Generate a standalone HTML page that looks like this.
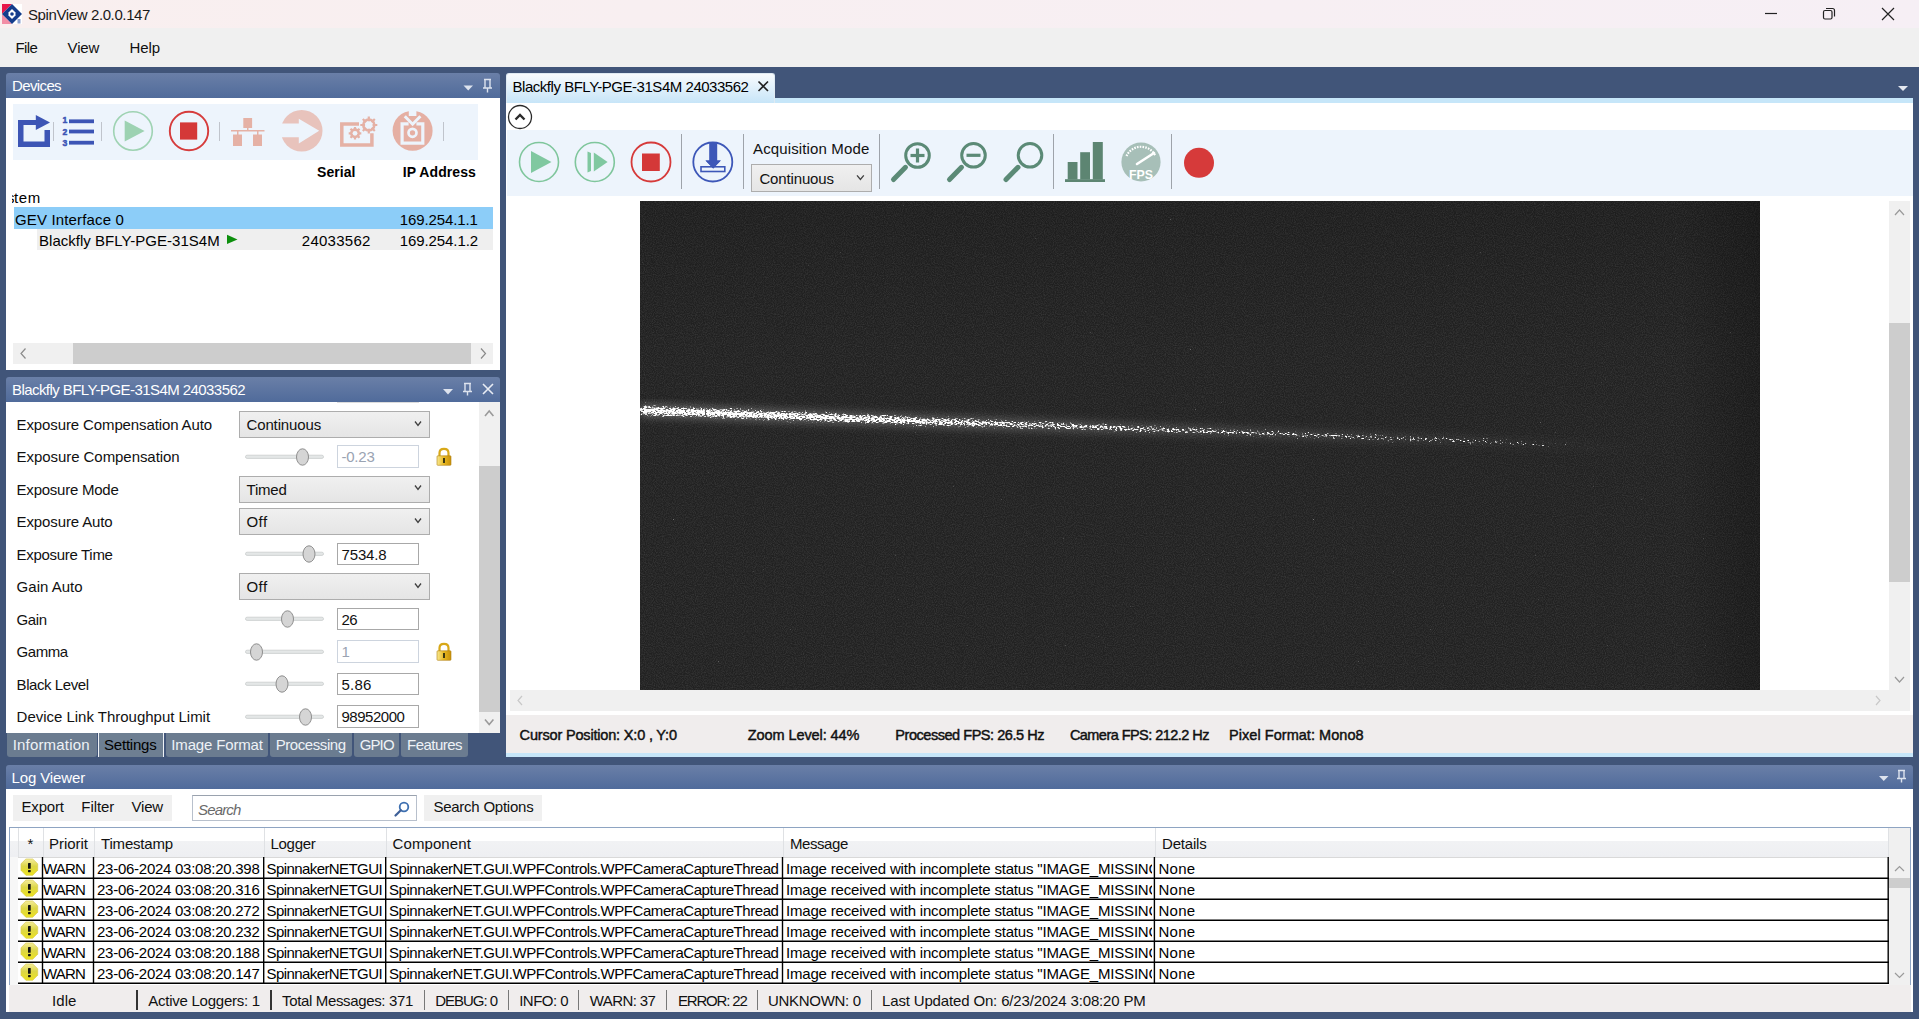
<!DOCTYPE html><html><head><meta charset="utf-8"><style>html,body{margin:0;padding:0;width:1919px;height:1019px;overflow:hidden;position:relative;font-family:"Liberation Sans", sans-serif;}</style></head><body><div style="position:absolute;left:0px;top:0px;width:1919px;height:28px;background:linear-gradient(90deg,#f9efef,#f6eff5);"></div>
<div style="position:absolute;left:0px;top:28px;width:1919px;height:39px;background:#f0f0f0;"></div>
<svg style="position:absolute;left:0px;top:0px;" width="28" height="28" viewBox="0 0 28 28">
<rect x="2" y="4" width="20" height="20" fill="#fff"/>
<polygon points="2,4 12,4 2,14" fill="#e8174a"/>
<polygon points="2,14 12,24 2,24" fill="#f28ea6"/>
<polygon points="2,14 12,4 22,14 12,24" fill="#143c8c"/>
<path d="M12,9 L15.5,12.5 L15.5,15.5 L12,19 L8.5,15.5 L8.5,12.5 Z" fill="#fff"/>
<circle cx="12" cy="14" r="1.8" fill="#143c8c"/>
<rect x="17.5" y="19" width="3" height="4.5" fill="#8aa0d0"/>
</svg>
<div style="position:absolute;left:28px;top:6.42px;font-size:15.0px;font-weight:400;color:#1a1a1a;white-space:pre;line-height:normal;letter-spacing:-0.389px;">SpinView 2.0.0.147</div>
<svg style="position:absolute;left:1750px;top:0px;" width="169" height="28" viewBox="1750 0 169 28">
<line x1="1765" y1="13.5" x2="1777" y2="13.5" stroke="#222" stroke-width="1.2"/>
<rect x="1823.5" y="10.5" width="8.5" height="8.5" rx="1.5" fill="none" stroke="#222" stroke-width="1.2"/>
<path d="M1826,8.5 H1832.5 Q1834.5,8.5 1834.5,10.5 V16.5" fill="none" stroke="#222" stroke-width="1.2"/>
<path d="M1882,8 L1894,20 M1894,8 L1882,20" stroke="#222" stroke-width="1.2"/>
</svg>
<div style="position:absolute;left:15.6px;top:39.42px;font-size:15.0px;font-weight:400;color:#111;white-space:pre;line-height:normal;letter-spacing:-0.668px;">File</div>
<div style="position:absolute;left:67.6px;top:39.42px;font-size:15.0px;font-weight:400;color:#111;white-space:pre;line-height:normal;letter-spacing:-0.188px;">View</div>
<div style="position:absolute;left:129.5px;top:39.42px;font-size:15.0px;font-weight:400;color:#111;white-space:pre;line-height:normal;letter-spacing:-0.090px;">Help</div>
<div style="position:absolute;left:0px;top:67px;width:1919px;height:952px;background:#415579;"></div>
<div style="position:absolute;left:6px;top:73px;width:494px;height:25px;background:linear-gradient(#6a7fa7,#506b9b);border-radius:3px 3px 0 0;"></div>
<div style="position:absolute;left:12px;top:77.42px;font-size:15.0px;font-weight:400;color:#fff;white-space:pre;line-height:normal;letter-spacing:-0.623px;">Devices</div>
<svg style="position:absolute;left:440px;top:73px;" width="60" height="25" viewBox="440 73 60 25">
<polygon points="463.5,85.5 473,85.5 468.25,90.5" fill="#dde3ee"/>
<path d="M484,79.5 H491 M485,79.5 V88 M490,79.5 V88 M483,88 H492 M487.5,88 V92.5" stroke="#dde3ee" stroke-width="1.4" fill="none"/>
</svg>
<div style="position:absolute;left:6px;top:98px;width:494px;height:272px;background:#fff;"></div>
<div style="position:absolute;left:13px;top:104px;width:465px;height:56px;background:#edf4fc;"></div>
<svg style="position:absolute;left:13px;top:104px;" width="465" height="56" viewBox="13 104 465 56">
<path d="M18,120 H36 V125 H23.5 V141.5 H44.5 V130 H50 V147 H18 Z" fill="#3d55b5"/>
<polygon points="35.8,115 50,122.5 35.8,130" fill="#3d55b5"/>
<line x1="53.5" y1="122" x2="53.5" y2="141" stroke="#c0c4cc" stroke-width="1"/>
<g fill="#3d55b5">
<rect x="69" y="119.4" width="25" height="3.8"/>
<rect x="69" y="129.6" width="25" height="3.8"/>
<rect x="69" y="140.8" width="25" height="3.8"/>
<text x="62.6" y="123.2" stroke="#3d55b5" stroke-width="0.5" font-family="Liberation Sans" font-weight="700" font-size="9" textLength="4.8" lengthAdjust="spacingAndGlyphs">1</text>
<text x="62.6" y="134.7" stroke="#3d55b5" stroke-width="0.5" font-family="Liberation Sans" font-weight="700" font-size="9" textLength="4.8" lengthAdjust="spacingAndGlyphs">2</text>
<text x="62.6" y="145.9" stroke="#3d55b5" stroke-width="0.5" font-family="Liberation Sans" font-weight="700" font-size="9" textLength="4.8" lengthAdjust="spacingAndGlyphs">3</text>
</g>
<line x1="101.5" y1="122" x2="101.5" y2="141" stroke="#c0c4cc" stroke-width="1"/>
<circle cx="133" cy="131" r="19.3" fill="none" stroke="#9fd3b3" stroke-width="1.6"/>
<polygon points="124.7,120.4 144.6,131 124.7,141.6" fill="#9dd2b2"/>
<circle cx="189" cy="131" r="19.2" fill="none" stroke="#d63c3c" stroke-width="1.9"/>
<rect x="180" y="122.4" width="17.2" height="17.2" fill="#d43838"/>
<line x1="219.5" y1="122" x2="219.5" y2="141" stroke="#c0c4cc" stroke-width="1"/>
<g fill="#e5b1a5">
<rect x="243.3" y="118" width="8.8" height="10"/>
<rect x="231" y="130" width="33.5" height="1.5"/>
<rect x="247" y="127" width="1.5" height="4"/>
<rect x="237" y="131" width="1.5" height="4"/>
<rect x="257" y="131" width="1.5" height="4"/>
<rect x="233" y="134.5" width="9" height="11.5"/>
<rect x="253" y="134.5" width="9" height="11.5"/>
</g>
<circle cx="301.7" cy="130.7" r="20.8" fill="#e8c3bc"/>
<polygon points="279,123.5 298.8,123.5 298.8,118.8 319.2,130.7 298.8,143.6 298.8,137.3 279,137.3" fill="#edf4fc"/>
<g fill="none" stroke="#e5b1a5" stroke-width="3.5">
<path d="M359,124 H341.8 V144.9 H371.9 V133.3"/>
</g>
<g fill="#e5b1a5">
<circle cx="368.8" cy="125" r="6.8"/><circle cx="355" cy="133.3" r="5"/>
</g>
<g fill="#edf4fc"><circle cx="368.8" cy="125" r="4.2"/><circle cx="355" cy="133.3" r="2.6"/></g>
<g stroke="#e5b1a5" stroke-width="2.2">
<path d="M368.8,116.5 V133.5 M360.3,125 H377.3 M362.8,119 L374.8,131 M374.8,119 L362.8,131"/>
<path d="M355,127 V139.6 M348.7,133.3 H361.3 M350.5,128.8 L359.5,137.8 M359.5,128.8 L350.5,137.8"/>
</g>
<g fill="#edf4fc"><circle cx="368.8" cy="125" r="3.8"/><circle cx="355" cy="133.3" r="2.4"/></g>
<circle cx="412.6" cy="130.7" r="20" fill="#e5afa3"/>
<path d="M408.6,123.8 H402.1 V143.1 H422.8 V123.8 H416.4" fill="none" stroke="#edf4fc" stroke-width="3.2"/>
<circle cx="412.5" cy="132.8" r="4" fill="none" stroke="#edf4fc" stroke-width="2.7"/>
<rect x="408.8" y="108" width="7.6" height="8" fill="#edf4fc"/>
<path d="M404.8,116.2 L412.6,124.2 L420.4,116.2" fill="none" stroke="#edf4fc" stroke-width="3"/>
<line x1="443.5" y1="122" x2="443.5" y2="141" stroke="#c0c4cc" stroke-width="1"/>
</svg>
<div style="position:absolute;left:317px;top:164.33px;font-size:14.0px;font-weight:700;color:#000;white-space:pre;line-height:normal;letter-spacing:0.043px;">Serial</div>
<div style="position:absolute;left:402.7px;top:164.33px;font-size:14.0px;font-weight:700;color:#000;white-space:pre;line-height:normal;letter-spacing:0.092px;">IP Address</div>
<div style="position:absolute;left:14px;top:189.43px;font-size:15.0px;font-weight:400;color:#000;white-space:pre;line-height:normal;letter-spacing:0.661px;">tem</div>
<div style="position:absolute;left:11.5px;top:190px;width:2.5px;height:15px;overflow:hidden"><div style="position:absolute;right:-0.5px;top:-0.6px;font-size:15px;line-height:normal;color:#000">s</div></div>
<div style="position:absolute;left:13px;top:224.5px;width:2px;height:0px;"></div>
<div style="position:absolute;left:14px;top:207px;width:479px;height:22px;background:#8ccdf8;"></div>
<div style="position:absolute;left:15px;top:211.43px;font-size:15.0px;font-weight:400;color:#000;white-space:pre;line-height:normal;letter-spacing:0.151px;">GEV Interface 0</div>
<div style="position:absolute;left:399.8px;top:211.43px;font-size:15.0px;font-weight:400;color:#000;white-space:pre;line-height:normal;letter-spacing:-0.114px;">169.254.1.1</div>
<div style="position:absolute;left:37px;top:229px;width:456px;height:21px;background:#efefef;"></div>
<div style="position:absolute;left:39px;top:231.93px;font-size:15.0px;font-weight:400;color:#000;white-space:pre;line-height:normal;letter-spacing:0.027px;">Blackfly BFLY-PGE-31S4M</div>
<svg style="position:absolute;left:225px;top:232px;" width="15" height="15" viewBox="225 232 15 15"><polygon points="227,234.7 237.5,239.4 227,244" fill="#0d8f0d"/></svg>
<div style="position:absolute;left:301.8px;top:231.93px;font-size:15.0px;font-weight:400;color:#000;white-space:pre;line-height:normal;letter-spacing:0.256px;">24033562</div>
<div style="position:absolute;left:399.8px;top:231.93px;font-size:15.0px;font-weight:400;color:#000;white-space:pre;line-height:normal;letter-spacing:-0.095px;">169.254.1.2</div>
<div style="position:absolute;left:13px;top:343px;width:480px;height:21px;background:#f0f0f0;"></div>
<div style="position:absolute;left:73px;top:343px;width:398px;height:21px;background:#cdcdcd;"></div>
<svg style="position:absolute;left:13px;top:343px;" width="480" height="21" viewBox="13 343 480 21">
<path d="M25.5,348.5 L21,353.5 L25.5,358.5" fill="none" stroke="#8a8a8a" stroke-width="1.2"/>
<path d="M481,348.5 L485.5,353.5 L481,358.5" fill="none" stroke="#8a8a8a" stroke-width="1.2"/>
</svg>
<div style="position:absolute;left:6px;top:377px;width:494px;height:25px;background:linear-gradient(#6a7fa7,#506b9b);border-radius:3px 3px 0 0;"></div>
<div style="position:absolute;left:12px;top:381.43px;font-size:15.0px;font-weight:400;color:#fff;white-space:pre;line-height:normal;letter-spacing:-0.562px;">Blackfly BFLY-PGE-31S4M 24033562</div>
<svg style="position:absolute;left:440px;top:377px;" width="60" height="25" viewBox="440 377 60 25">
<polygon points="443,389 453,389 448,394.5" fill="#dde3ee"/>
<path d="M464,383.5 H471 M465,383.5 V391.5 M470,383.5 V391.5 M463,391.5 H472 M467.5,391.5 V395.5" stroke="#dde3ee" stroke-width="1.4" fill="none"/>
<path d="M483,384 L493,394 M493,384 L483,394" stroke="#e8ecf4" stroke-width="1.6"/>
</svg>
<div style="position:absolute;left:6px;top:402px;width:494px;height:331px;background:#fff;"></div>
<div style="position:absolute;left:479px;top:402px;width:21px;height:331px;background:#f0f0f0;"></div>
<div style="position:absolute;left:479px;top:466px;width:21px;height:246px;background:#cdcdcd;"></div>
<svg style="position:absolute;left:479px;top:402px;" width="21" height="331" viewBox="479 402 21 331">
<path d="M485,416 L489.2,411 L493.4,416" fill="none" stroke="#9a9a9a" stroke-width="1.6"/>
<path d="M485,719.5 L489.2,724.5 L493.4,719.5" fill="none" stroke="#9a9a9a" stroke-width="1.6"/>
</svg>
<div style="position:absolute;left:16.6px;top:416.23px;font-size:15.0px;font-weight:400;color:#111;white-space:pre;line-height:normal;letter-spacing:-0.118px;">Exposure Compensation Auto</div>
<div style="position:absolute;left:239px;top:411.0px;width:191px;height:27px;box-sizing:border-box;border:1px solid #adadad;background:linear-gradient(#f0f0f0,#e5e5e5);"></div>
<div style="position:absolute;left:246.5px;top:416.43px;font-size:15.0px;font-weight:400;color:#111;white-space:pre;line-height:normal;letter-spacing:-0.139px;">Continuous</div>
<svg style="position:absolute;left:410px;top:416.5px;" width="16" height="14" viewBox="410 416.5 16 14"><path d="M415,421.0 L418,425.0 L421,421.0" fill="none" stroke="#404040" stroke-width="1.3"/></svg>
<div style="position:absolute;left:16.6px;top:448.23px;font-size:15.0px;font-weight:400;color:#111;white-space:pre;line-height:normal;letter-spacing:-0.060px;">Exposure Compensation</div>
<svg style="position:absolute;left:240px;top:444.5px;" width="90" height="24" viewBox="240 444.5 90 24">
<rect x="245.5" y="454.7" width="78" height="3.2" rx="1.6" fill="#e4e7e7" stroke="#c9cdcd" stroke-width="0.8"/>
<ellipse cx="302.5" cy="456.5" rx="6" ry="8.2" fill="#d5d5d5" stroke="#8e8e8e" stroke-width="1"/>
</svg>
<div style="position:absolute;left:337px;top:445.3px;width:82px;height:22.5px;box-sizing:border-box;border:1px solid #cdd4de;background:#fff;"></div>
<div style="position:absolute;left:341.5px;top:448.43px;font-size:15.0px;font-weight:400;color:#9aa3b2;white-space:pre;line-height:normal;letter-spacing:-0.241px;">-0.23</div>
<svg style="position:absolute;left:434px;top:446.5px;" width="20" height="20" viewBox="434 446.5 20 20">
<defs><linearGradient id="lg456" x1="0" x2="1"><stop offset="0" stop-color="#f8e890"/><stop offset="0.5" stop-color="#e8b820"/><stop offset="1" stop-color="#c89008"/></linearGradient></defs>
<path d="M439.5,455.5 V452.5 Q439.5,448.3 444,448.3 Q448.5,448.3 448.5,452.5 V455.5" fill="none" stroke="#d8a818" stroke-width="2.2"/>
<rect x="437" y="455.3" width="14" height="9.5" rx="0.8" fill="url(#lg456)" stroke="#b08010" stroke-width="0.6"/>
<path d="M444,457.5 V462.5" stroke="#2a2a10" stroke-width="1.8"/>
</svg>
<div style="position:absolute;left:16.6px;top:480.73px;font-size:15.0px;font-weight:400;color:#111;white-space:pre;line-height:normal;letter-spacing:-0.236px;">Exposure Mode</div>
<div style="position:absolute;left:239px;top:475.5px;width:191px;height:27px;box-sizing:border-box;border:1px solid #adadad;background:linear-gradient(#f0f0f0,#e5e5e5);"></div>
<div style="position:absolute;left:246.5px;top:480.93px;font-size:15.0px;font-weight:400;color:#111;white-space:pre;line-height:normal;letter-spacing:-0.225px;">Timed</div>
<svg style="position:absolute;left:410px;top:481px;" width="16" height="14" viewBox="410 481 16 14"><path d="M415,485.5 L418,489.5 L421,485.5" fill="none" stroke="#404040" stroke-width="1.3"/></svg>
<div style="position:absolute;left:16.6px;top:513.22px;font-size:15.0px;font-weight:400;color:#111;white-space:pre;line-height:normal;letter-spacing:-0.121px;">Exposure Auto</div>
<div style="position:absolute;left:239px;top:508.0px;width:191px;height:27px;box-sizing:border-box;border:1px solid #adadad;background:linear-gradient(#f0f0f0,#e5e5e5);"></div>
<div style="position:absolute;left:246.5px;top:513.42px;font-size:15.0px;font-weight:400;color:#111;white-space:pre;line-height:normal;letter-spacing:0.422px;">Off</div>
<svg style="position:absolute;left:410px;top:513.5px;" width="16" height="14" viewBox="410 513.5 16 14"><path d="M415,518.0 L418,522.0 L421,518.0" fill="none" stroke="#404040" stroke-width="1.3"/></svg>
<div style="position:absolute;left:16.6px;top:545.72px;font-size:15.0px;font-weight:400;color:#111;white-space:pre;line-height:normal;letter-spacing:-0.311px;">Exposure Time</div>
<svg style="position:absolute;left:240px;top:542px;" width="90" height="24" viewBox="240 542 90 24">
<rect x="245.5" y="552.2" width="78" height="3.2" rx="1.6" fill="#e4e7e7" stroke="#c9cdcd" stroke-width="0.8"/>
<ellipse cx="309" cy="554" rx="6" ry="8.2" fill="#d5d5d5" stroke="#8e8e8e" stroke-width="1"/>
</svg>
<div style="position:absolute;left:337px;top:542.8px;width:82px;height:22.5px;box-sizing:border-box;border:1px solid #a8a8a8;background:#fff;"></div>
<div style="position:absolute;left:341.5px;top:545.92px;font-size:15.0px;font-weight:400;color:#111;white-space:pre;line-height:normal;letter-spacing:-0.148px;">7534.8</div>
<div style="position:absolute;left:16.6px;top:578.22px;font-size:15.0px;font-weight:400;color:#111;white-space:pre;line-height:normal;letter-spacing:0.012px;">Gain Auto</div>
<div style="position:absolute;left:239px;top:573.0px;width:191px;height:27px;box-sizing:border-box;border:1px solid #adadad;background:linear-gradient(#f0f0f0,#e5e5e5);"></div>
<div style="position:absolute;left:246.5px;top:578.42px;font-size:15.0px;font-weight:400;color:#111;white-space:pre;line-height:normal;letter-spacing:0.422px;">Off</div>
<svg style="position:absolute;left:410px;top:578.5px;" width="16" height="14" viewBox="410 578.5 16 14"><path d="M415,583.0 L418,587.0 L421,583.0" fill="none" stroke="#404040" stroke-width="1.3"/></svg>
<div style="position:absolute;left:16.6px;top:610.72px;font-size:15.0px;font-weight:400;color:#111;white-space:pre;line-height:normal;letter-spacing:-0.422px;">Gain</div>
<svg style="position:absolute;left:240px;top:607px;" width="90" height="24" viewBox="240 607 90 24">
<rect x="245.5" y="617.2" width="78" height="3.2" rx="1.6" fill="#e4e7e7" stroke="#c9cdcd" stroke-width="0.8"/>
<ellipse cx="287.5" cy="619" rx="6" ry="8.2" fill="#d5d5d5" stroke="#8e8e8e" stroke-width="1"/>
</svg>
<div style="position:absolute;left:337px;top:607.8px;width:82px;height:22.5px;box-sizing:border-box;border:1px solid #a8a8a8;background:#fff;"></div>
<div style="position:absolute;left:341.5px;top:610.92px;font-size:15.0px;font-weight:400;color:#111;white-space:pre;line-height:normal;letter-spacing:-0.594px;">26</div>
<div style="position:absolute;left:16.6px;top:643.22px;font-size:15.0px;font-weight:400;color:#111;white-space:pre;line-height:normal;letter-spacing:-0.469px;">Gamma</div>
<svg style="position:absolute;left:240px;top:639.5px;" width="90" height="24" viewBox="240 639.5 90 24">
<rect x="245.5" y="649.7" width="78" height="3.2" rx="1.6" fill="#e4e7e7" stroke="#c9cdcd" stroke-width="0.8"/>
<ellipse cx="256.5" cy="651.5" rx="6" ry="8.2" fill="#d5d5d5" stroke="#8e8e8e" stroke-width="1"/>
</svg>
<div style="position:absolute;left:337px;top:640.3px;width:82px;height:22.5px;box-sizing:border-box;border:1px solid #cdd4de;background:#fff;"></div>
<div style="position:absolute;left:341.5px;top:643.42px;font-size:15.0px;font-weight:400;color:#9aa3b2;white-space:pre;line-height:normal;letter-spacing:-3.344px;">1</div>
<svg style="position:absolute;left:434px;top:641.5px;" width="20" height="20" viewBox="434 641.5 20 20">
<defs><linearGradient id="lg651" x1="0" x2="1"><stop offset="0" stop-color="#f8e890"/><stop offset="0.5" stop-color="#e8b820"/><stop offset="1" stop-color="#c89008"/></linearGradient></defs>
<path d="M439.5,650.5 V647.5 Q439.5,643.3 444,643.3 Q448.5,643.3 448.5,647.5 V650.5" fill="none" stroke="#d8a818" stroke-width="2.2"/>
<rect x="437" y="650.3" width="14" height="9.5" rx="0.8" fill="url(#lg651)" stroke="#b08010" stroke-width="0.6"/>
<path d="M444,652.5 V657.5" stroke="#2a2a10" stroke-width="1.8"/>
</svg>
<div style="position:absolute;left:16.6px;top:675.72px;font-size:15.0px;font-weight:400;color:#111;white-space:pre;line-height:normal;letter-spacing:-0.429px;">Black Level</div>
<svg style="position:absolute;left:240px;top:672px;" width="90" height="24" viewBox="240 672 90 24">
<rect x="245.5" y="682.2" width="78" height="3.2" rx="1.6" fill="#e4e7e7" stroke="#c9cdcd" stroke-width="0.8"/>
<ellipse cx="282" cy="684" rx="6" ry="8.2" fill="#d5d5d5" stroke="#8e8e8e" stroke-width="1"/>
</svg>
<div style="position:absolute;left:337px;top:672.8px;width:82px;height:22.5px;box-sizing:border-box;border:1px solid #a8a8a8;background:#fff;"></div>
<div style="position:absolute;left:341.5px;top:675.92px;font-size:15.0px;font-weight:400;color:#111;white-space:pre;line-height:normal;letter-spacing:0.199px;">5.86</div>
<div style="position:absolute;left:16.6px;top:708.22px;font-size:15.0px;font-weight:400;color:#111;white-space:pre;line-height:normal;letter-spacing:-0.018px;">Device Link Throughput Limit</div>
<svg style="position:absolute;left:240px;top:704.5px;" width="90" height="24" viewBox="240 704.5 90 24">
<rect x="245.5" y="714.7" width="78" height="3.2" rx="1.6" fill="#e4e7e7" stroke="#c9cdcd" stroke-width="0.8"/>
<ellipse cx="305.5" cy="716.5" rx="6" ry="8.2" fill="#d5d5d5" stroke="#8e8e8e" stroke-width="1"/>
</svg>
<div style="position:absolute;left:337px;top:705.3px;width:82px;height:22.5px;box-sizing:border-box;border:1px solid #a8a8a8;background:#fff;"></div>
<div style="position:absolute;left:341.5px;top:708.42px;font-size:15.0px;font-weight:400;color:#111;white-space:pre;line-height:normal;letter-spacing:-0.469px;">98952000</div>
<div style="position:absolute;left:7px;top:733px;width:90px;height:23.5px;background:#6b7c90;border-radius:0 0 3px 3px;"></div>
<div style="position:absolute;left:12.7px;top:736.42px;font-size:15.0px;font-weight:400;color:#eef2f6;white-space:pre;line-height:normal;letter-spacing:0.178px;">Information</div>
<div style="position:absolute;left:98px;top:733px;width:65.5px;height:24px;box-sizing:border-box;background:#6e7f92;border-left:1px solid #eef2f6;border-right:1px solid #eef2f6;"></div>
<div style="position:absolute;left:104px;top:736.42px;font-size:15.0px;font-weight:400;color:#000;white-space:pre;line-height:normal;letter-spacing:-0.213px;">Settings</div>
<div style="position:absolute;left:165.6px;top:733px;width:102.20000000000002px;height:23.5px;background:#6b7c90;border-radius:0 0 3px 3px;"></div>
<div style="position:absolute;left:171.29999999999998px;top:736.42px;font-size:15.0px;font-weight:400;color:#eef2f6;white-space:pre;line-height:normal;letter-spacing:-0.156px;">Image Format</div>
<div style="position:absolute;left:270px;top:733px;width:81.69999999999999px;height:23.5px;background:#6b7c90;border-radius:0 0 3px 3px;"></div>
<div style="position:absolute;left:275.7px;top:736.42px;font-size:15.0px;font-weight:400;color:#eef2f6;white-space:pre;line-height:normal;letter-spacing:-0.420px;">Processing</div>
<div style="position:absolute;left:354px;top:733px;width:44.60000000000002px;height:23.5px;background:#6b7c90;border-radius:0 0 3px 3px;"></div>
<div style="position:absolute;left:359.7px;top:736.42px;font-size:15.0px;font-weight:400;color:#eef2f6;white-space:pre;line-height:normal;letter-spacing:-0.879px;">GPIO</div>
<div style="position:absolute;left:401.4px;top:733px;width:66.20000000000005px;height:23.5px;background:#6b7c90;border-radius:0 0 3px 3px;"></div>
<div style="position:absolute;left:407.09999999999997px;top:736.42px;font-size:15.0px;font-weight:400;color:#eef2f6;white-space:pre;line-height:normal;letter-spacing:-0.525px;">Features</div>
<div style="position:absolute;left:506px;top:97.8px;width:1407px;height:5.2px;background:#c6e6f9;"></div>
<div style="position:absolute;left:506px;top:73px;width:268.5px;height:30px;background:linear-gradient(#f8fbfd,#c7e5f8);border-radius:3px 3px 0 0;box-sizing:border-box;border:1px solid #dfeaf2;border-bottom:none;"></div>
<div style="position:absolute;left:512.5px;top:78.42px;font-size:15.0px;font-weight:400;color:#000;white-space:pre;line-height:normal;letter-spacing:-0.468px;">Blackfly BFLY-PGE-31S4M 24033562</div>
<svg style="position:absolute;left:750px;top:75px;" width="24" height="24" viewBox="750 75 24 24"><path d="M758.5,81.5 L768,91 M768,81.5 L758.5,91" stroke="#222" stroke-width="1.6"/></svg>
<svg style="position:absolute;left:1890px;top:80px;" width="25" height="15" viewBox="1890 80 25 15"><polygon points="1898,86 1908,86 1903,91" fill="#e4e8f0"/></svg>
<div style="position:absolute;left:506px;top:103px;width:1407px;height:654px;background:#fff;"></div>
<svg style="position:absolute;left:506px;top:103px;" width="30" height="27" viewBox="506 103 30 27">
<circle cx="520" cy="117" r="11.5" fill="none" stroke="#2a2a2a" stroke-width="1.3"/>
<path d="M515.5,119.5 L520,115 L524.5,119.5" fill="none" stroke="#2a2a2a" stroke-width="2.4"/>
</svg>
<div style="position:absolute;left:507px;top:130px;width:1406px;height:66px;background:#edf4fc;"></div>
<svg style="position:absolute;left:507px;top:130px;" width="720" height="66" viewBox="507 130 720 66">
<circle cx="539" cy="162" r="19.5" fill="none" stroke="#7fc69c" stroke-width="1.6"/>
<polygon points="531,151 551.5,162 531,173" fill="#80c8a0"/>
<circle cx="594.8" cy="162" r="19.5" fill="none" stroke="#7fc69c" stroke-width="1.6"/>
<polygon points="587.5,151.5 591,153 591,171 587.5,172.5" fill="#80c8a0"/>
<polygon points="593.8,152.5 607.6,162 593.8,171.5" fill="#80c8a0"/>
<circle cx="651" cy="162" r="19.5" fill="none" stroke="#d63a3a" stroke-width="1.8"/>
<rect x="642" y="153.5" width="17.8" height="17.5" fill="#d43838"/>
<line x1="681.5" y1="134" x2="681.5" y2="189" stroke="#9ea3aa" stroke-width="1"/>
<circle cx="712.8" cy="162" r="19.5" fill="none" stroke="#3d57b8" stroke-width="1.8"/>
<rect x="709.2" y="142" width="8" height="20" fill="#3d57b8"/>
<polygon points="705.5,160.5 720.8,160.5 713.2,168.5" fill="#3d57b8"/>
<rect x="701" y="166.8" width="23.8" height="4.7" fill="none" stroke="#3d57b8" stroke-width="1.6"/>
<polygon points="705.5,160.5 720.8,160.5 713.2,168.5" fill="#3d57b8"/>
<line x1="743.5" y1="134" x2="743.5" y2="189" stroke="#9ea3aa" stroke-width="1"/>
<line x1="879.5" y1="134" x2="879.5" y2="189" stroke="#9ea3aa" stroke-width="1"/>
<g stroke="#5b8a76" fill="none">
<circle cx="917.5" cy="155.5" r="11.8" stroke-width="3"/>
<line x1="893.5" y1="179.5" x2="905.5" y2="167.3" stroke-width="5" stroke-linecap="round"/>
<line x1="910.5" y1="155.5" x2="924.5" y2="155.5" stroke-width="3.2"/>
<line x1="917.5" y1="148.5" x2="917.5" y2="162.5" stroke-width="3.2"/>
<circle cx="973.5" cy="155.3" r="11.8" stroke-width="3"/>
<line x1="949.5" y1="179.5" x2="961.5" y2="167.3" stroke-width="5" stroke-linecap="round"/>
<line x1="966.5" y1="155.3" x2="980.5" y2="155.3" stroke-width="3.2"/>
<circle cx="1030" cy="155.3" r="11.8" stroke-width="3"/>
<line x1="1006" y1="179.5" x2="1018" y2="167.3" stroke-width="5" stroke-linecap="round"/>
</g>
<line x1="1053.5" y1="134" x2="1053.5" y2="189" stroke="#9ea3aa" stroke-width="1"/>
<g fill="#5d8572">
<rect x="1067.7" y="162" width="9.8" height="17.5"/>
<rect x="1080.2" y="152.2" width="9.8" height="27.3"/>
<rect x="1092.8" y="142" width="10" height="37.5"/>
<rect x="1065" y="179.2" width="40" height="2.8"/>
</g>
<circle cx="1141" cy="162" r="19.6" fill="#a7bfb8"/>
<path d="M1126.5,156 A16,16 0 0 1 1155.5,156" fill="none" stroke="#fff" stroke-width="2.2" stroke-dasharray="1.6,1.2"/>
<line x1="1137" y1="164" x2="1154" y2="153" stroke="#fff" stroke-width="2.6" stroke-linecap="round"/>
<text x="1141" y="178.5" text-anchor="middle" font-family="Liberation Sans" font-weight="700" font-size="13" fill="#fff" textLength="24" lengthAdjust="spacingAndGlyphs">FPS</text>
<line x1="1171.5" y1="134" x2="1171.5" y2="189" stroke="#9ea3aa" stroke-width="1"/>
<circle cx="1199" cy="162.8" r="15" fill="#d63a3a"/>
</svg>
<div style="position:absolute;left:753px;top:140.12px;font-size:15.0px;font-weight:400;color:#111;white-space:pre;line-height:normal;letter-spacing:0.135px;">Acquisition Mode</div>
<div style="position:absolute;left:751.3px;top:164.4px;width:121.2px;height:27.2px;box-sizing:border-box;border:1px solid #adadad;background:linear-gradient(#f0f0f0,#e5e5e5);"></div>
<div style="position:absolute;left:759.4px;top:170.43px;font-size:15.0px;font-weight:400;color:#111;white-space:pre;line-height:normal;letter-spacing:-0.139px;">Continuous</div>
<svg style="position:absolute;left:850px;top:170px;" width="20" height="15" viewBox="850 170 20 15"><path d="M857,175.3 L860.4,179.5 L863.8,175.3" fill="none" stroke="#404040" stroke-width="1.3"/></svg>
<svg style="position:absolute;left:640px;top:201px" width="1120" height="489" viewBox="0 0 1120 489">
<defs>
<filter id="noise" x="0" y="0" width="1120" height="489" filterUnits="userSpaceOnUse">
<feTurbulence type="fractalNoise" baseFrequency="0.9" numOctaves="2" seed="3" result="t"/>
<feColorMatrix type="matrix" values="0 0 0 0 0.5  0 0 0 0 0.5  0 0 0 0 0.5  0 0 0 0.9 -0.3"/>
</filter>
<filter id="spk" x="0" y="0" width="1120" height="489" filterUnits="userSpaceOnUse">
<feGaussianBlur in="SourceGraphic" stdDeviation="2" result="band"/>
<feTurbulence type="fractalNoise" baseFrequency="0.4 0.7" numOctaves="2" seed="11" result="n"/>
<feColorMatrix in="n" type="matrix" values="0 0 0 0 1  0 0 0 0 1  0 0 0 0 1  1 0 0 0 0" result="na"/>
<feComposite in="na" in2="band" operator="arithmetic" k1="0" k2="1.6" k3="1" k4="-1.38" result="sum"/>
<feComponentTransfer in="sum"><feFuncA type="linear" slope="3.5" intercept="0"/></feComponentTransfer>
</filter>
<linearGradient id="vig" x1="0" x2="1"><stop offset="0" stop-color="#000" stop-opacity="0"/><stop offset="1" stop-color="#000" stop-opacity="0.22"/></linearGradient>
<linearGradient id="vigt" x1="0" x2="0" y1="0" y2="1"><stop offset="0" stop-color="#000" stop-opacity="0.1"/><stop offset="1" stop-color="#000" stop-opacity="0"/></linearGradient>
<filter id="blur2"><feGaussianBlur stdDeviation="4"/></filter>
<linearGradient id="sg" x1="0" x2="1010" gradientUnits="userSpaceOnUse"><stop offset="0" stop-color="#fff" stop-opacity="1"/><stop offset="0.27" stop-color="#fff" stop-opacity="0.95"/><stop offset="0.34" stop-color="#fff" stop-opacity="0.84"/><stop offset="0.6" stop-color="#fff" stop-opacity="0.8"/><stop offset="0.85" stop-color="#fff" stop-opacity="0.76"/><stop offset="0.95" stop-color="#fff" stop-opacity="0.45"/><stop offset="1" stop-color="#fff" stop-opacity="0"/></linearGradient>
<linearGradient id="sg2" x1="0" x2="1"><stop offset="0" stop-color="#fff" stop-opacity="0.3"/><stop offset="0.6" stop-color="#fff" stop-opacity="0.15"/><stop offset="0.92" stop-color="#fff" stop-opacity="0.04"/><stop offset="1" stop-color="#fff" stop-opacity="0"/></linearGradient>
</defs>
<rect width="1120" height="489" fill="#212121"/>
<rect width="1120" height="489" filter="url(#noise)" opacity="0.3"/>
<rect x="1040" width="80" height="489" fill="url(#vig)"/>
<rect width="1120" height="160" fill="url(#vigt)"/>
<path d="M0,203 L320,215.5 L552,225 L828,236 L967,244 L1010,246 L1010,249 L967,248 L828,243 L552,234 L320,227.5 L0,215.5 Z" fill="url(#sg2)" filter="url(#blur2)"/>
<path d="M0,204.5 L320,217.5 L552,227 L828,237.8 L967,245 L1010,246.8 L1010,248.4 L967,247.6 L828,241.8 L552,232.6 L320,225.5 L0,214 Z" fill="url(#sg)" filter="url(#spk)"/>
</svg>
<div style="position:absolute;left:1889px;top:201px;width:21px;height:489px;background:#f0f0f0;"></div>
<div style="position:absolute;left:1889px;top:322.5px;width:21px;height:259px;background:#cdcdcd;"></div>
<svg style="position:absolute;left:1889px;top:201px;" width="21" height="489" viewBox="1889 201 21 489">
<path d="M1895,215 L1899.5,210 L1904,215" fill="none" stroke="#9a9a9a" stroke-width="1.2"/>
<path d="M1895,677 L1899.5,682 L1904,677" fill="none" stroke="#9a9a9a" stroke-width="1.2"/>
</svg>
<div style="position:absolute;left:510px;top:690px;width:1400px;height:21px;background:#f0f0f0;"></div>
<svg style="position:absolute;left:510px;top:690px;" width="1400" height="21" viewBox="510 690 1400 21">
<path d="M522,696 L518,700.5 L522,705" fill="none" stroke="#c8c8c8" stroke-width="1.2"/>
<path d="M1876,696 L1880,700.5 L1876,705" fill="none" stroke="#c8c8c8" stroke-width="1.2"/>
</svg>
<div style="position:absolute;left:506px;top:715px;width:1407px;height:38px;background:#f0eded;"></div>
<div style="position:absolute;left:506px;top:753px;width:1407px;height:4px;background:#c6e6f9;"></div>
<div style="position:absolute;left:519.6px;top:727.18px;font-size:14.5px;font-weight:400;color:#111;white-space:pre;line-height:normal;-webkit-text-stroke:0.45px #111;letter-spacing:-0.174px;">Cursor Position: X:0 , Y:0</div>
<div style="position:absolute;left:747.8px;top:727.18px;font-size:14.5px;font-weight:400;color:#111;white-space:pre;line-height:normal;-webkit-text-stroke:0.45px #111;letter-spacing:-0.090px;">Zoom Level: 44%</div>
<div style="position:absolute;left:895.3px;top:727.18px;font-size:14.5px;font-weight:400;color:#111;white-space:pre;line-height:normal;-webkit-text-stroke:0.45px #111;letter-spacing:-0.458px;">Processed FPS: 26.5 Hz</div>
<div style="position:absolute;left:1069.9px;top:727.18px;font-size:14.5px;font-weight:400;color:#111;white-space:pre;line-height:normal;-webkit-text-stroke:0.45px #111;letter-spacing:-0.545px;">Camera FPS: 212.2 Hz</div>
<div style="position:absolute;left:1229.1px;top:727.18px;font-size:14.5px;font-weight:400;color:#111;white-space:pre;line-height:normal;-webkit-text-stroke:0.45px #111;letter-spacing:0.038px;">Pixel Format: Mono8</div>
<div style="position:absolute;left:6px;top:764.5px;width:1907px;height:24.5px;background:linear-gradient(#6a7fa7,#506b9b);border-radius:3px 3px 0 0;"></div>
<div style="position:absolute;left:11.5px;top:768.92px;font-size:15.0px;font-weight:400;color:#fff;white-space:pre;line-height:normal;letter-spacing:-0.128px;">Log Viewer</div>
<svg style="position:absolute;left:1870px;top:764px;" width="43" height="25" viewBox="1870 764 43 25">
<polygon points="1879,776 1888.5,776 1883.75,781" fill="#dde3ee"/>
<path d="M1898,770.5 H1905 M1899,770.5 V778.5 M1904,770.5 V778.5 M1897,778.5 H1906 M1901.5,778.5 V782.5" stroke="#dde3ee" stroke-width="1.4" fill="none"/>
</svg>
<div style="position:absolute;left:6px;top:789px;width:1907px;height:223px;background:#fff;"></div>
<div style="position:absolute;left:13px;top:795.2px;width:159px;height:26.3px;background:#f0f0f0;"></div>
<div style="position:absolute;left:21.6px;top:798.42px;font-size:15.0px;font-weight:400;color:#111;white-space:pre;line-height:normal;letter-spacing:-0.227px;">Export</div>
<div style="position:absolute;left:81.3px;top:798.42px;font-size:15.0px;font-weight:400;color:#111;white-space:pre;line-height:normal;letter-spacing:-0.057px;">Filter</div>
<div style="position:absolute;left:131.6px;top:798.42px;font-size:15.0px;font-weight:400;color:#111;white-space:pre;line-height:normal;letter-spacing:-0.213px;">View</div>
<div style="position:absolute;left:192px;top:795.2px;width:224.7px;height:26.3px;box-sizing:border-box;border:1px solid #b8c0cc;border-top-color:#9aa2ae;background:#fff;"></div>
<div style="position:absolute;left:198px;top:801.42px;font-size:15.0px;font-weight:400;color:#6a6a6a;white-space:pre;line-height:normal;font-style:italic;letter-spacing:-0.839px;">Search</div>
<svg style="position:absolute;left:392px;top:800px;" width="20" height="18" viewBox="392 800 20 18">
<circle cx="404" cy="807" r="4.3" fill="none" stroke="#3d6fb0" stroke-width="1.8"/>
<line x1="395.5" y1="815.5" x2="400.8" y2="810.2" stroke="#3d5f98" stroke-width="2.2" stroke-linecap="round"/>
</svg>
<div style="position:absolute;left:424px;top:795.2px;width:118px;height:26.3px;background:#f0f0f0;"></div>
<div style="position:absolute;left:433.4px;top:798.42px;font-size:15.0px;font-weight:400;color:#111;white-space:pre;line-height:normal;letter-spacing:-0.242px;">Search Options</div>
<div style="position:absolute;left:9px;top:826.5px;width:1902px;height:159px;box-sizing:border-box;border:1px solid #8ea4c2;background:#fff;"></div>
<div style="position:absolute;left:10px;top:827.5px;width:1878px;height:29px;background:linear-gradient(#ffffff 0%,#ffffff 45%,#f1f2f4 46%,#eeeff2 100%);"></div>
<div style="position:absolute;left:10px;top:856.5px;width:1878px;height:1px;background:#d9d9d9;"></div>
<div style="position:absolute;left:10px;top:857px;width:8px;height:128px;background:#f7f7f7;"></div>
<div style="position:absolute;left:18px;top:827.5px;width:1px;height:29px;background:#dfe1e4;"></div>
<div style="position:absolute;left:42.5px;top:827.5px;width:1px;height:29px;background:#dfe1e4;"></div>
<div style="position:absolute;left:93.5px;top:827.5px;width:1px;height:29px;background:#dfe1e4;"></div>
<div style="position:absolute;left:263.7px;top:827.5px;width:1px;height:29px;background:#dfe1e4;"></div>
<div style="position:absolute;left:385.7px;top:827.5px;width:1px;height:29px;background:#dfe1e4;"></div>
<div style="position:absolute;left:782.8px;top:827.5px;width:1px;height:29px;background:#dfe1e4;"></div>
<div style="position:absolute;left:1154.5px;top:827.5px;width:1px;height:29px;background:#dfe1e4;"></div>
<div style="position:absolute;left:1888px;top:827.5px;width:1px;height:29px;background:#dfe1e4;"></div>
<div style="position:absolute;left:27.5px;top:835.42px;font-size:15.0px;font-weight:400;color:#111;white-space:pre;line-height:normal;letter-spacing:0.156px;">*</div>
<div style="position:absolute;left:49px;top:835.42px;font-size:15.0px;font-weight:400;color:#111;white-space:pre;line-height:normal;letter-spacing:-0.025px;">Priorit</div>
<div style="position:absolute;left:101px;top:835.42px;font-size:15.0px;font-weight:400;color:#111;white-space:pre;line-height:normal;letter-spacing:-0.181px;">Timestamp</div>
<div style="position:absolute;left:270.5px;top:835.42px;font-size:15.0px;font-weight:400;color:#111;white-space:pre;line-height:normal;letter-spacing:-0.286px;">Logger</div>
<div style="position:absolute;left:392.5px;top:835.42px;font-size:15.0px;font-weight:400;color:#111;white-space:pre;line-height:normal;letter-spacing:0.104px;">Component</div>
<div style="position:absolute;left:789.9px;top:835.42px;font-size:15.0px;font-weight:400;color:#111;white-space:pre;line-height:normal;letter-spacing:-0.411px;">Message</div>
<div style="position:absolute;left:1162px;top:835.42px;font-size:15.0px;font-weight:400;color:#111;white-space:pre;line-height:normal;letter-spacing:-0.194px;">Details</div>
<svg style="position:absolute;left:18px;top:857px;" width="24" height="21" viewBox="18 857 24 21">
<defs><linearGradient id="wg0" x1="0" x2="0" y1="0" y2="1"><stop offset="0" stop-color="#f4ec9a"/><stop offset="0.45" stop-color="#dcd648"/><stop offset="1" stop-color="#ece21e"/></linearGradient></defs>
<polygon points="21,863.8 25.9,859 32.7,859 37.7,863.8 37.7,870.3 32.7,875.3 25.9,875.3 21,870.3" fill="url(#wg0)" stroke="#d8cc50" stroke-width="0.7"/>
<rect x="28" y="863" width="2.7" height="5.8" rx="0.6" fill="#111"/>
<rect x="28" y="870" width="2.7" height="2.2" rx="0.6" fill="#111"/>
</svg>
<div style="position:absolute;left:43px;top:859.92px;font-size:15.0px;font-weight:400;color:#000;white-space:pre;line-height:normal;letter-spacing:-0.820px;">WARN</div>
<div style="position:absolute;left:97px;top:859.92px;font-size:15.0px;font-weight:400;color:#000;white-space:pre;line-height:normal;letter-spacing:-0.260px;">23-06-2024 03:08:20.398</div>
<div style="position:absolute;left:266.6px;top:859.92px;font-size:15.0px;font-weight:400;color:#000;white-space:pre;line-height:normal;letter-spacing:-0.588px;">SpinnakerNETGUI</div>
<div style="position:absolute;left:389px;top:859.92px;font-size:15.0px;font-weight:400;color:#000;white-space:pre;line-height:normal;letter-spacing:-0.437px;">SpinnakerNET.GUI.WPFControls.WPFCameraCaptureThread</div>
<div style="position:absolute;left:786px;top:859.92px;font-size:15.0px;font-weight:400;color:#000;white-space:pre;line-height:normal;width:365.5px;overflow:hidden;letter-spacing:-0.189px;">Image received with incomplete status &quot;IMAGE_MISSING</div>
<div style="position:absolute;left:1158.4px;top:859.92px;font-size:15.0px;font-weight:400;color:#000;white-space:pre;line-height:normal;letter-spacing:0.285px;">None</div>
<svg style="position:absolute;left:18px;top:878.3px;" width="24" height="21" viewBox="18 878.3 24 21">
<defs><linearGradient id="wg1" x1="0" x2="0" y1="0" y2="1"><stop offset="0" stop-color="#f4ec9a"/><stop offset="0.45" stop-color="#dcd648"/><stop offset="1" stop-color="#ece21e"/></linearGradient></defs>
<polygon points="21,885.0999999999999 25.9,880.3 32.7,880.3 37.7,885.0999999999999 37.7,891.5999999999999 32.7,896.5999999999999 25.9,896.5999999999999 21,891.5999999999999" fill="url(#wg1)" stroke="#d8cc50" stroke-width="0.7"/>
<rect x="28" y="884.3" width="2.7" height="5.8" rx="0.6" fill="#111"/>
<rect x="28" y="891.3" width="2.7" height="2.2" rx="0.6" fill="#111"/>
</svg>
<div style="position:absolute;left:43px;top:881.22px;font-size:15.0px;font-weight:400;color:#000;white-space:pre;line-height:normal;letter-spacing:-0.820px;">WARN</div>
<div style="position:absolute;left:97px;top:881.22px;font-size:15.0px;font-weight:400;color:#000;white-space:pre;line-height:normal;letter-spacing:-0.260px;">23-06-2024 03:08:20.316</div>
<div style="position:absolute;left:266.6px;top:881.22px;font-size:15.0px;font-weight:400;color:#000;white-space:pre;line-height:normal;letter-spacing:-0.588px;">SpinnakerNETGUI</div>
<div style="position:absolute;left:389px;top:881.22px;font-size:15.0px;font-weight:400;color:#000;white-space:pre;line-height:normal;letter-spacing:-0.437px;">SpinnakerNET.GUI.WPFControls.WPFCameraCaptureThread</div>
<div style="position:absolute;left:786px;top:881.22px;font-size:15.0px;font-weight:400;color:#000;white-space:pre;line-height:normal;width:365.5px;overflow:hidden;letter-spacing:-0.189px;">Image received with incomplete status &quot;IMAGE_MISSING</div>
<div style="position:absolute;left:1158.4px;top:881.22px;font-size:15.0px;font-weight:400;color:#000;white-space:pre;line-height:normal;letter-spacing:0.285px;">None</div>
<svg style="position:absolute;left:18px;top:899.3px;" width="24" height="21" viewBox="18 899.3 24 21">
<defs><linearGradient id="wg2" x1="0" x2="0" y1="0" y2="1"><stop offset="0" stop-color="#f4ec9a"/><stop offset="0.45" stop-color="#dcd648"/><stop offset="1" stop-color="#ece21e"/></linearGradient></defs>
<polygon points="21,906.0999999999999 25.9,901.3 32.7,901.3 37.7,906.0999999999999 37.7,912.5999999999999 32.7,917.5999999999999 25.9,917.5999999999999 21,912.5999999999999" fill="url(#wg2)" stroke="#d8cc50" stroke-width="0.7"/>
<rect x="28" y="905.3" width="2.7" height="5.8" rx="0.6" fill="#111"/>
<rect x="28" y="912.3" width="2.7" height="2.2" rx="0.6" fill="#111"/>
</svg>
<div style="position:absolute;left:43px;top:902.22px;font-size:15.0px;font-weight:400;color:#000;white-space:pre;line-height:normal;letter-spacing:-0.820px;">WARN</div>
<div style="position:absolute;left:97px;top:902.22px;font-size:15.0px;font-weight:400;color:#000;white-space:pre;line-height:normal;letter-spacing:-0.260px;">23-06-2024 03:08:20.272</div>
<div style="position:absolute;left:266.6px;top:902.22px;font-size:15.0px;font-weight:400;color:#000;white-space:pre;line-height:normal;letter-spacing:-0.588px;">SpinnakerNETGUI</div>
<div style="position:absolute;left:389px;top:902.22px;font-size:15.0px;font-weight:400;color:#000;white-space:pre;line-height:normal;letter-spacing:-0.437px;">SpinnakerNET.GUI.WPFControls.WPFCameraCaptureThread</div>
<div style="position:absolute;left:786px;top:902.22px;font-size:15.0px;font-weight:400;color:#000;white-space:pre;line-height:normal;width:365.5px;overflow:hidden;letter-spacing:-0.189px;">Image received with incomplete status &quot;IMAGE_MISSING</div>
<div style="position:absolute;left:1158.4px;top:902.22px;font-size:15.0px;font-weight:400;color:#000;white-space:pre;line-height:normal;letter-spacing:0.285px;">None</div>
<svg style="position:absolute;left:18px;top:920.3px;" width="24" height="21" viewBox="18 920.3 24 21">
<defs><linearGradient id="wg3" x1="0" x2="0" y1="0" y2="1"><stop offset="0" stop-color="#f4ec9a"/><stop offset="0.45" stop-color="#dcd648"/><stop offset="1" stop-color="#ece21e"/></linearGradient></defs>
<polygon points="21,927.0999999999999 25.9,922.3 32.7,922.3 37.7,927.0999999999999 37.7,933.5999999999999 32.7,938.5999999999999 25.9,938.5999999999999 21,933.5999999999999" fill="url(#wg3)" stroke="#d8cc50" stroke-width="0.7"/>
<rect x="28" y="926.3" width="2.7" height="5.8" rx="0.6" fill="#111"/>
<rect x="28" y="933.3" width="2.7" height="2.2" rx="0.6" fill="#111"/>
</svg>
<div style="position:absolute;left:43px;top:923.22px;font-size:15.0px;font-weight:400;color:#000;white-space:pre;line-height:normal;letter-spacing:-0.820px;">WARN</div>
<div style="position:absolute;left:97px;top:923.22px;font-size:15.0px;font-weight:400;color:#000;white-space:pre;line-height:normal;letter-spacing:-0.260px;">23-06-2024 03:08:20.232</div>
<div style="position:absolute;left:266.6px;top:923.22px;font-size:15.0px;font-weight:400;color:#000;white-space:pre;line-height:normal;letter-spacing:-0.588px;">SpinnakerNETGUI</div>
<div style="position:absolute;left:389px;top:923.22px;font-size:15.0px;font-weight:400;color:#000;white-space:pre;line-height:normal;letter-spacing:-0.437px;">SpinnakerNET.GUI.WPFControls.WPFCameraCaptureThread</div>
<div style="position:absolute;left:786px;top:923.22px;font-size:15.0px;font-weight:400;color:#000;white-space:pre;line-height:normal;width:365.5px;overflow:hidden;letter-spacing:-0.189px;">Image received with incomplete status &quot;IMAGE_MISSING</div>
<div style="position:absolute;left:1158.4px;top:923.22px;font-size:15.0px;font-weight:400;color:#000;white-space:pre;line-height:normal;letter-spacing:0.285px;">None</div>
<svg style="position:absolute;left:18px;top:941.3px;" width="24" height="21" viewBox="18 941.3 24 21">
<defs><linearGradient id="wg4" x1="0" x2="0" y1="0" y2="1"><stop offset="0" stop-color="#f4ec9a"/><stop offset="0.45" stop-color="#dcd648"/><stop offset="1" stop-color="#ece21e"/></linearGradient></defs>
<polygon points="21,948.0999999999999 25.9,943.3 32.7,943.3 37.7,948.0999999999999 37.7,954.5999999999999 32.7,959.5999999999999 25.9,959.5999999999999 21,954.5999999999999" fill="url(#wg4)" stroke="#d8cc50" stroke-width="0.7"/>
<rect x="28" y="947.3" width="2.7" height="5.8" rx="0.6" fill="#111"/>
<rect x="28" y="954.3" width="2.7" height="2.2" rx="0.6" fill="#111"/>
</svg>
<div style="position:absolute;left:43px;top:944.22px;font-size:15.0px;font-weight:400;color:#000;white-space:pre;line-height:normal;letter-spacing:-0.820px;">WARN</div>
<div style="position:absolute;left:97px;top:944.22px;font-size:15.0px;font-weight:400;color:#000;white-space:pre;line-height:normal;letter-spacing:-0.260px;">23-06-2024 03:08:20.188</div>
<div style="position:absolute;left:266.6px;top:944.22px;font-size:15.0px;font-weight:400;color:#000;white-space:pre;line-height:normal;letter-spacing:-0.588px;">SpinnakerNETGUI</div>
<div style="position:absolute;left:389px;top:944.22px;font-size:15.0px;font-weight:400;color:#000;white-space:pre;line-height:normal;letter-spacing:-0.437px;">SpinnakerNET.GUI.WPFControls.WPFCameraCaptureThread</div>
<div style="position:absolute;left:786px;top:944.22px;font-size:15.0px;font-weight:400;color:#000;white-space:pre;line-height:normal;width:365.5px;overflow:hidden;letter-spacing:-0.189px;">Image received with incomplete status &quot;IMAGE_MISSING</div>
<div style="position:absolute;left:1158.4px;top:944.22px;font-size:15.0px;font-weight:400;color:#000;white-space:pre;line-height:normal;letter-spacing:0.285px;">None</div>
<svg style="position:absolute;left:18px;top:962.3px;" width="24" height="21" viewBox="18 962.3 24 21">
<defs><linearGradient id="wg5" x1="0" x2="0" y1="0" y2="1"><stop offset="0" stop-color="#f4ec9a"/><stop offset="0.45" stop-color="#dcd648"/><stop offset="1" stop-color="#ece21e"/></linearGradient></defs>
<polygon points="21,969.0999999999999 25.9,964.3 32.7,964.3 37.7,969.0999999999999 37.7,975.5999999999999 32.7,980.5999999999999 25.9,980.5999999999999 21,975.5999999999999" fill="url(#wg5)" stroke="#d8cc50" stroke-width="0.7"/>
<rect x="28" y="968.3" width="2.7" height="5.8" rx="0.6" fill="#111"/>
<rect x="28" y="975.3" width="2.7" height="2.2" rx="0.6" fill="#111"/>
</svg>
<div style="position:absolute;left:43px;top:965.22px;font-size:15.0px;font-weight:400;color:#000;white-space:pre;line-height:normal;letter-spacing:-0.820px;">WARN</div>
<div style="position:absolute;left:97px;top:965.22px;font-size:15.0px;font-weight:400;color:#000;white-space:pre;line-height:normal;letter-spacing:-0.260px;">23-06-2024 03:08:20.147</div>
<div style="position:absolute;left:266.6px;top:965.22px;font-size:15.0px;font-weight:400;color:#000;white-space:pre;line-height:normal;letter-spacing:-0.588px;">SpinnakerNETGUI</div>
<div style="position:absolute;left:389px;top:965.22px;font-size:15.0px;font-weight:400;color:#000;white-space:pre;line-height:normal;letter-spacing:-0.437px;">SpinnakerNET.GUI.WPFControls.WPFCameraCaptureThread</div>
<div style="position:absolute;left:786px;top:965.22px;font-size:15.0px;font-weight:400;color:#000;white-space:pre;line-height:normal;width:365.5px;overflow:hidden;letter-spacing:-0.189px;">Image received with incomplete status &quot;IMAGE_MISSING</div>
<div style="position:absolute;left:1158.4px;top:965.22px;font-size:15.0px;font-weight:400;color:#000;white-space:pre;line-height:normal;letter-spacing:0.285px;">None</div>
<svg style="position:absolute;left:10px;top:850px;" width="1890" height="140" viewBox="10 850 1890 140"><line x1="18" y1="878.2" x2="1889" y2="878.2" stroke="#000" stroke-width="1.5"/><line x1="18" y1="899.2" x2="1889" y2="899.2" stroke="#000" stroke-width="1.5"/><line x1="18" y1="920.2" x2="1889" y2="920.2" stroke="#000" stroke-width="1.5"/><line x1="18" y1="941.2" x2="1889" y2="941.2" stroke="#000" stroke-width="1.5"/><line x1="18" y1="962.2" x2="1889" y2="962.2" stroke="#000" stroke-width="1.5"/><line x1="18" y1="983.2" x2="1889" y2="983.2" stroke="#000" stroke-width="1.5"/><line x1="42.5" y1="857" x2="42.5" y2="984" stroke="#000" stroke-width="1.4"/><line x1="93.5" y1="857" x2="93.5" y2="984" stroke="#000" stroke-width="1.4"/><line x1="263.7" y1="857" x2="263.7" y2="984" stroke="#000" stroke-width="1.4"/><line x1="385.7" y1="857" x2="385.7" y2="984" stroke="#000" stroke-width="1.4"/><line x1="782.5" y1="857" x2="782.5" y2="984" stroke="#000" stroke-width="1.4"/><line x1="1154.4" y1="857" x2="1154.4" y2="984" stroke="#000" stroke-width="1.4"/><line x1="1888.2" y1="857" x2="1888.2" y2="984" stroke="#000" stroke-width="1.4"/></svg>
<div style="position:absolute;left:337px;top:401.5px;width:82px;height:1px;background:#dcdcdc"></div>
<div style="position:absolute;left:1889px;top:827.5px;width:21px;height:157.5px;background:#f0f0f0;"></div>
<div style="position:absolute;left:1889px;top:878px;width:21px;height:9.5px;background:#cdcdcd;"></div>
<svg style="position:absolute;left:1889px;top:827px;" width="21" height="158" viewBox="1889 827 21 158">
<path d="M1895,871 L1899.5,866.5 L1904,871" fill="none" stroke="#9a9a9a" stroke-width="1.2"/>
<path d="M1895,973 L1899.5,977.5 L1904,973" fill="none" stroke="#9a9a9a" stroke-width="1.2"/>
</svg>
<div style="position:absolute;left:9px;top:985px;width:1902px;height:27px;background:#f0eded;"></div>
<div style="position:absolute;left:52px;top:992.42px;font-size:15.0px;font-weight:400;color:#111;white-space:pre;line-height:normal;letter-spacing:0.078px;">Idle</div>
<div style="position:absolute;left:135.6px;top:989.5px;width:2px;height:20.3px;background:#333;"></div>
<div style="position:absolute;left:269.7px;top:989.5px;width:2px;height:20.3px;background:#333;"></div>
<div style="position:absolute;left:423.9px;top:989.5px;width:1px;height:20.3px;background:#777;"></div>
<div style="position:absolute;left:507.9px;top:989.5px;width:1px;height:20.3px;background:#777;"></div>
<div style="position:absolute;left:577.8px;top:989.5px;width:1px;height:20.3px;background:#777;"></div>
<div style="position:absolute;left:665.8px;top:989.5px;width:1px;height:20.3px;background:#777;"></div>
<div style="position:absolute;left:757.1px;top:989.5px;width:1px;height:20.3px;background:#777;"></div>
<div style="position:absolute;left:871.3px;top:989.5px;width:1px;height:20.3px;background:#777;"></div>
<div style="position:absolute;left:148.2px;top:992.42px;font-size:15.0px;font-weight:400;color:#111;white-space:pre;line-height:normal;letter-spacing:-0.242px;">Active Loggers: 1</div>
<div style="position:absolute;left:282px;top:992.42px;font-size:15.0px;font-weight:400;color:#111;white-space:pre;line-height:normal;letter-spacing:-0.346px;">Total Messages: 371</div>
<div style="position:absolute;left:435.2px;top:992.42px;font-size:15.0px;font-weight:400;color:#111;white-space:pre;line-height:normal;letter-spacing:-1.029px;">DEBUG: 0</div>
<div style="position:absolute;left:519.2px;top:992.42px;font-size:15.0px;font-weight:400;color:#111;white-space:pre;line-height:normal;letter-spacing:-0.531px;">INFO: 0</div>
<div style="position:absolute;left:589.7px;top:992.42px;font-size:15.0px;font-weight:400;color:#111;white-space:pre;line-height:normal;letter-spacing:-0.575px;">WARN: 37</div>
<div style="position:absolute;left:677.9px;top:992.42px;font-size:15.0px;font-weight:400;color:#111;white-space:pre;line-height:normal;letter-spacing:-1.156px;">ERROR: 22</div>
<div style="position:absolute;left:768px;top:992.42px;font-size:15.0px;font-weight:400;color:#111;white-space:pre;line-height:normal;letter-spacing:-0.304px;">UNKNOWN: 0</div>
<div style="position:absolute;left:882px;top:992.42px;font-size:15.0px;font-weight:400;color:#111;white-space:pre;line-height:normal;letter-spacing:-0.153px;">Last Updated On: 6/23/2024 3:08:20 PM</div></body></html>
